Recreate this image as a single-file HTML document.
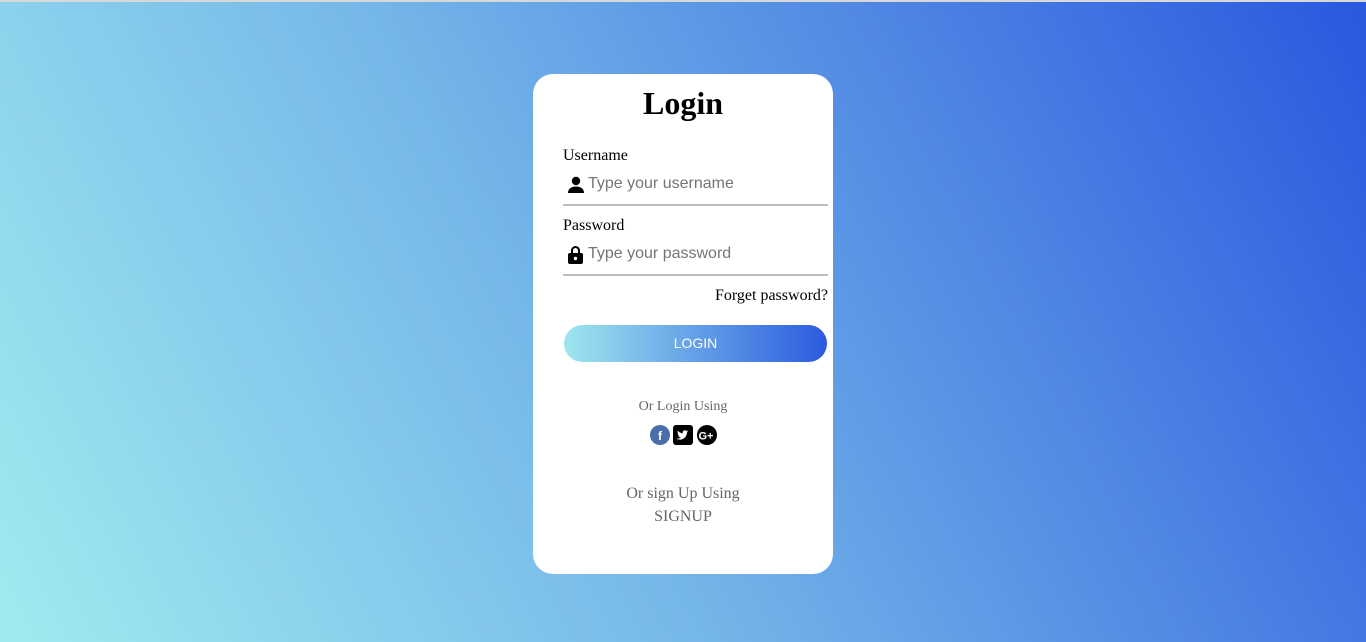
<!DOCTYPE html>
<html><head><style>
html,body{margin:0;padding:0;}
body{width:1366px;height:642px;overflow:hidden;position:relative;
background:linear-gradient(62deg,#a0ebef 0%,#76b9e9 40%,#4a80e3 75%,#2a57df 100%);
font-family:"Liberation Serif",serif;}
.top{position:absolute;left:0;top:0;width:1366px;height:2px;background:#d8d8d8;}
.card{position:absolute;left:533px;top:74px;width:300px;height:500px;background:#fff;border-radius:20px;}
h1{position:absolute;margin:0;text-align:center;font-size:32px;font-weight:bold;line-height:38px;}
.lbl{position:absolute;left:563px;font-size:16px;}
.inp{position:absolute;left:563px;width:265px;height:2px;background:#bdbdbd;}
.ph{position:absolute;left:588px;font-family:"Liberation Sans",sans-serif;font-size:16px;color:#757575;}
.ic{position:absolute;left:567px;}
.btn{position:absolute;left:564px;top:325px;width:263px;height:37px;border-radius:19px;
background:linear-gradient(to right,#9ee7ee,#6aa6e8 45%,#2b5be0);color:#fff;font-family:"Liberation Sans",sans-serif;font-size:14px;text-align:center;line-height:37px;}
.g{position:absolute;left:533px;width:300px;text-align:center;color:#666;}
</style></head><body>
<div class="top"></div>
<div class="card"></div>
<h1 style="left:533px;width:300px;top:84px">Login</h1>
<div class="lbl" style="top:147px">Username</div>
<svg class="ic" style="top:176px" width="18" height="18" viewBox="0 0 18 18"><circle cx="9" cy="5" r="4.2"/><path d="M1 17c0-4.5 3.5-6.5 8-6.5s8 2 8 6.5z"/></svg>
<div class="ph" style="top:175px">Type your username</div>
<div class="inp" style="top:204px"></div>
<div class="lbl" style="top:217px">Password</div>
<svg class="ic" style="top:245px" width="17" height="19" viewBox="0 0 17 19"><path d="M4 8V5.5a4.5 4.5 0 0 1 9 0V8h-2V5.5a2.5 2.5 0 0 0-5 0V8z"/><rect x="1" y="8" width="15" height="11" rx="2"/><circle cx="8.5" cy="13.5" r="1.7" fill="#fff"/></svg>
<div class="ph" style="top:245px">Type your password</div>
<div class="inp" style="top:274px"></div>
<div style="position:absolute;right:538px;top:287px;font-size:16px;">Forget password?</div>
<div class="btn">LOGIN</div>
<div class="g" style="top:399px;font-size:14px;">Or Login Using</div>
<svg style="position:absolute;left:650px;top:425px" width="68" height="20" viewBox="0 0 68 20">
<circle cx="10" cy="10" r="10" fill="#4a6ea9"/><text x="10" y="15" fill="#fff" font-family="Liberation Sans" font-weight="bold" font-size="12" text-anchor="middle">f</text>
<rect x="23" y="0" width="20" height="20" rx="3"/><path d="M27 14c3 1.5 7 .5 9-3 .7-1.2 1-2.5 1-3.5l1.3-1.2-1.4.3.9-1.2-1.5.5c-1-1-3-.8-3.5.8-.2.6-.1 1.2 0 1.5-2 0-3.8-1-5-2.4-.6 1.2 0 2.5.8 3l-.9-.2c0 1.2.8 2 1.8 2.3h-1c.4 1 1.2 1.6 2.3 1.7-1 .8-2.4 1.2-3.8 1z" fill="#fff"/>
<circle cx="57" cy="10" r="10"/><text x="56" y="14.5" fill="#fff" font-family="Liberation Sans" font-weight="bold" font-size="11" text-anchor="middle">G+</text>
</svg>
<div class="g" style="top:485px;font-size:16px;">Or sign Up Using</div>
<div class="g" style="top:508px;font-size:16px;">SIGNUP</div>
</body></html>
